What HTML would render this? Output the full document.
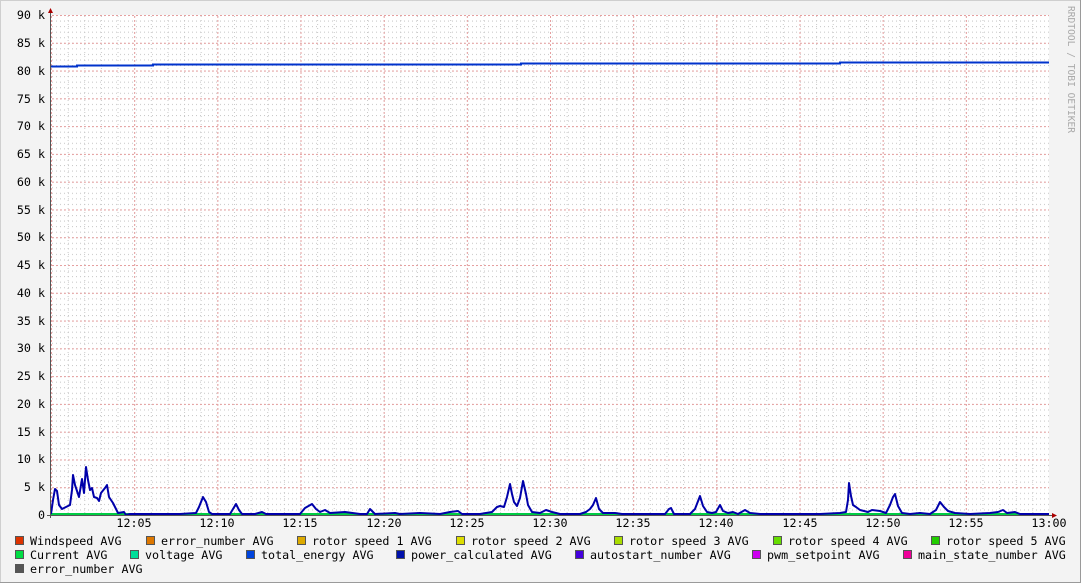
<!DOCTYPE html>
<html><head><style>
html,body{margin:0;padding:0;background:#f3f3f3;}
svg{display:block;font-family:"DejaVu Sans Mono","Liberation Mono",monospace;font-size:11.7px;}
</style></head><body>
<svg width="1081" height="583" xmlns="http://www.w3.org/2000/svg">
<defs>
<pattern id="vmin" x="51" y="0" width="16.633" height="4" patternUnits="userSpaceOnUse">
<line x1="0.5" y1="0" x2="0.5" y2="1" stroke="#c8c8c8" stroke-width="1"/>
</pattern>
<pattern id="hmin" x="0" y="15" width="4" height="5.5556" patternUnits="userSpaceOnUse">
<line x1="0" y1="0.5" x2="1" y2="0.5" stroke="#c8c8c8" stroke-width="1"/>
</pattern>
<pattern id="vmaj" x="51" y="0" width="83.167" height="4" patternUnits="userSpaceOnUse">
<line x1="0.5" y1="0" x2="0.5" y2="2" stroke="#e6a0a0" stroke-width="1"/>
</pattern>
<pattern id="hmaj" x="0" y="15" width="4" height="27.778" patternUnits="userSpaceOnUse">
<line x1="0" y1="0.5" x2="2" y2="0.5" stroke="#e6a0a0" stroke-width="1"/>
</pattern>
</defs>
<rect x="0" y="0" width="1081" height="583" fill="#f3f3f3"/>
<line x1="0.5" y1="0" x2="0.5" y2="583" stroke="#cfcfcf"/>
<line x1="0" y1="0.5" x2="1081" y2="0.5" stroke="#cfcfcf"/>
<line x1="1080.5" y1="0" x2="1080.5" y2="583" stroke="#9a9a9a"/>
<line x1="0" y1="582.5" x2="1081" y2="582.5" stroke="#9a9a9a"/>
<rect x="51" y="15" width="998" height="500" fill="#fff"/>
<rect x="51" y="15" width="998" height="500" fill="url(#vmin)"/>
<rect x="51" y="15" width="998" height="500" fill="url(#hmin)"/>
<rect x="51" y="15" width="998" height="500" fill="url(#vmaj)"/>
<rect x="51" y="15" width="998" height="500" fill="url(#hmaj)"/>
<g fill="#000" text-anchor="end">
<text x="45" y="19">90 k</text><text x="45" y="47">85 k</text><text x="45" y="75">80 k</text>
<text x="45" y="103">75 k</text><text x="45" y="130">70 k</text><text x="45" y="158">65 k</text>
<text x="45" y="186">60 k</text><text x="45" y="214">55 k</text><text x="45" y="241">50 k</text>
<text x="45" y="269">45 k</text><text x="45" y="297">40 k</text><text x="45" y="325">35 k</text>
<text x="45" y="352">30 k</text><text x="45" y="380">25 k</text><text x="45" y="408">20 k</text>
<text x="45" y="436">15 k</text><text x="45" y="463">10 k</text><text x="45" y="491">5 k</text>
<text x="45" y="519">0</text>
</g>
<g fill="#000" text-anchor="middle">
<text x="134" y="527">12:05</text><text x="217" y="527">12:10</text><text x="300" y="527">12:15</text>
<text x="384" y="527">12:20</text><text x="467" y="527">12:25</text><text x="550" y="527">12:30</text>
<text x="633" y="527">12:35</text><text x="716" y="527">12:40</text><text x="800" y="527">12:45</text>
<text x="883" y="527">12:50</text><text x="966" y="527">12:55</text><text x="1049" y="527">13:00</text>
</g>
<text x="1068" y="6" fill="#aaa" font-size="9.6" transform="rotate(90 1068 6)">RRDTOOL / TOBI OETIKER</text>
<polyline fill="none" stroke="#00cc44" stroke-width="2" points="51,514 1049,514"/>
<polyline fill="none" stroke="#0033cc" stroke-width="2" points="51,66.5 77,66.5 77,65.5 153,65.5 153,64.5 521,64.5 521,63.5 840,63.5 840,62.5 1049,62.5"/>
<polyline fill="none" stroke="#0000aa" stroke-width="2" stroke-linejoin="round" points="51,514 53,500 55,489 57,491 59,505 62,509 66,507 70,505 72,490 73,475 75,485 77,491 79,497 81,485 82,479 84,493 86,467 88,480 90,490 92,488 94,497 97,498 99,501 101,493 105,488 107,485 109,497 113,503 116,509 118,513 124,512 126,515 130,514 134,514 140,514 150,514 180,514 196,513 199,507 203,497 206,502 209,512 212,514 230,514 233,509 236,504 239,510 242,514 255,514 262,512 266,514 300,514 305,508 312,504 316,509 320,512 325,510 330,513 345,512 360,514 367,514 370,509 372,511 375,514 395,513 400,514 420,513 440,514 450,512 458,511 462,514 480,514 492,512 497,507 500,506 504,507 507,497 510,484 512,494 514,502 517,506 520,498 523,481 526,494 528,505 532,512 540,513 546,510 552,512 560,514 580,514 586,512 590,509 593,505 596,498 599,509 603,513 615,513 622,514 640,514 650,514 665,514 669,509 671,508 674,514 690,514 695,509 700,496 703,506 707,512 712,513 716,512 720,505 723,511 728,513 733,512 738,514 745,510 750,513 760,514 790,514 800,514 820,514 840,513 846,512 848,500 849,483 851,496 853,505 856,507 860,510 868,512 872,510 880,511 886,513 890,505 893,497 895,494 898,506 902,513 910,514 920,513 930,514 936,510 940,502 944,507 948,511 955,513 970,514 990,513 998,512 1003,510 1007,513 1015,512 1020,514 1049,514"/>
<line x1="50.5" y1="10" x2="50.5" y2="518" stroke="#555"/>
<line x1="47" y1="515.5" x2="1053" y2="515.5" stroke="#555"/>
<polygon points="48,13 53,13 50.5,8" fill="#a00"/>
<polygon points="1052,513 1052,518 1057,515.5" fill="#a00"/>
<g stroke="#555" stroke-width="1">
<rect x="15.5" y="536.5" width="8" height="8" fill="#dd3300"/>
<rect x="146.5" y="536.5" width="8" height="8" fill="#dd7700"/>
<rect x="297.5" y="536.5" width="8" height="8" fill="#ddaa00"/>
<rect x="456.5" y="536.5" width="8" height="8" fill="#dddd00"/>
<rect x="614.5" y="536.5" width="8" height="8" fill="#aadd00"/>
<rect x="773.5" y="536.5" width="8" height="8" fill="#66dd00"/>
<rect x="931.5" y="536.5" width="8" height="8" fill="#22cc00"/>
<rect x="15.5" y="550.5" width="8" height="8" fill="#00dd44"/>
<rect x="130.5" y="550.5" width="8" height="8" fill="#00dd99"/>
<rect x="246.5" y="550.5" width="8" height="8" fill="#0044dd"/>
<rect x="396.5" y="550.5" width="8" height="8" fill="#0011aa"/>
<rect x="575.5" y="550.5" width="8" height="8" fill="#4400dd"/>
<rect x="752.5" y="550.5" width="8" height="8" fill="#cc00ee"/>
<rect x="903.5" y="550.5" width="8" height="8" fill="#ee0099"/>
<rect x="15.5" y="564.5" width="8" height="8" fill="#555"/>
</g>
<g fill="#000">
<text x="30" y="545">Windspeed AVG</text>
<text x="161" y="545">error_number AVG</text>
<text x="312" y="545">rotor speed 1 AVG</text>
<text x="471" y="545">rotor speed 2 AVG</text>
<text x="629" y="545">rotor speed 3 AVG</text>
<text x="788" y="545">rotor speed 4 AVG</text>
<text x="946" y="545">rotor speed 5 AVG</text>
<text x="30" y="559">Current AVG</text>
<text x="145" y="559">voltage AVG</text>
<text x="261" y="559">total_energy AVG</text>
<text x="411" y="559">power_calculated AVG</text>
<text x="590" y="559">autostart_number AVG</text>
<text x="767" y="559">pwm_setpoint AVG</text>
<text x="918" y="559">main_state_number AVG</text>
<text x="30" y="573">error_number AVG</text>
</g>
</svg>
</body></html>
